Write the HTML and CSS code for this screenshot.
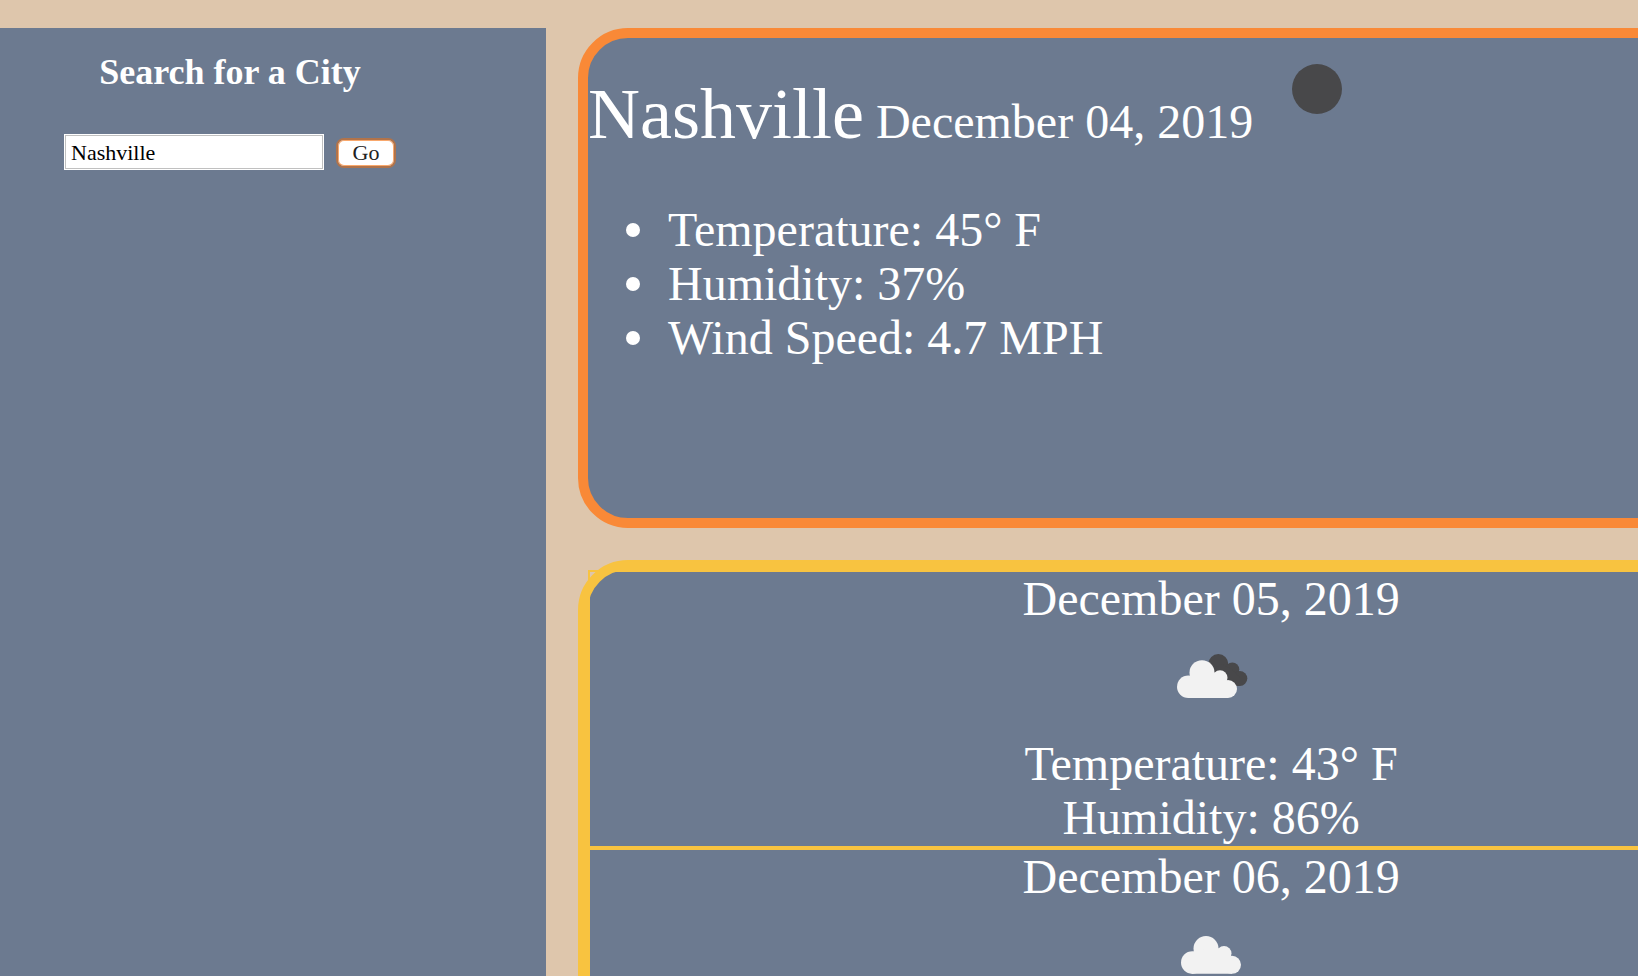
FILE: index.html
```html
<!DOCTYPE html>
<html lang="en">
<head>
<meta charset="utf-8">
<title>Weather Dashboard</title>
<link rel="stylesheet" href="styles.css">
</head>
<body>
<div class="layout">
  <aside class="sidebar">
    <form class="search">
      <h1 class="search-title"><label for="city">Search for a City</label></h1>
      <div class="search-row">
        <input class="search-input" id="city" type="text" value="Nashville">
        <button class="search-button" type="button">Go</button>
      </div>
    </form>
  </aside>
  <main class="content">
    <section class="current">
      <div class="current-head">
        <span class="city">Nashville</span>
        <span>December 04, 2019</span>
        <svg class="icon" viewBox="0 0 100 100" aria-hidden="true"><circle cx="52" cy="51" r="25" fill="#48484a"/></svg>
      </div>
      <ul class="stats">
        <li>Temperature: 45° F</li>
        <li>Humidity: 37%</li>
        <li>Wind Speed: 4.7 MPH</li>
      </ul>
    </section>
    <section class="forecast">
      <article class="day">
        <div class="day-date">December 05, 2019</div>
        <svg class="icon day-icon" viewBox="0 0 100 100" aria-hidden="true">
          <g fill="#48484a">
            <circle cx="57.300" cy="38" r="10"/>
            <circle cx="71.300" cy="43.500" r="7"/>
            <circle cx="78.800" cy="52.500" r="7.500"/>
            <path d="M50 45L60 38L71 43L79 52V60H66z"/>
          </g>
          <g fill="#f2f2f2" transform="translate(-4 2.200)">
            <circle cx="31.300" cy="58.600" r="11.300"/>
            <circle cx="45" cy="44.500" r="12.500"/>
            <circle cx="63" cy="49.500" r="7.500"/>
            <circle cx="71" cy="60.800" r="9"/>
            <path d="M31.300 48L45 44.500H60L71 55V69.800H31.300z"/>
          </g>
        </svg>
        <div>Temperature: 43° F</div>
        <div>Humidity: 86%</div>
      </article>
      <article class="day">
        <div class="day-date">December 06, 2019</div>
        <svg class="icon day-icon" viewBox="0 0 100 100" aria-hidden="true">
          <g fill="#f2f2f2">
            <circle cx="31.300" cy="58.600" r="11.300"/>
            <circle cx="45" cy="44.500" r="12.500"/>
            <circle cx="63" cy="49.500" r="7.500"/>
            <circle cx="71" cy="60.800" r="9"/>
            <path d="M31.300 48L45 44.500H60L71 55V69.800H31.300z"/>
          </g>
        </svg>
      </article>
    </section>
  </main>
</div>
</body>
</html>
```
FILE: styles.css
```css
* { box-sizing: border-box; }

body {
  margin: 0;
  height: 100vh;
  overflow: hidden;
  background: #dec6ac;
  color: #fff;
  font-family: "Liberation Serif", "Times New Roman", serif;
  font-size: 48px;
  line-height: 54px;
}

.layout {
  display: flex;
  gap: 32px;
  height: 100%;
  padding-top: 28px;
}

.sidebar {
  flex: 0 0 33.3333%;
  padding: 24px 0 0 64px;
  background: #6c7a90;
}

.search { width: fit-content; }

.search-title {
  margin: 0 0 42px;
  font-size: 36px;
  line-height: 40px;
  text-align: center;
}

.search-row {
  display: flex;
  align-items: center;
  gap: 12px;
}

.search-input {
  width: 260px;
  height: 36px;
  padding: 2px 5px 0;
  border: 2px solid #fff;
  outline: 1px solid #c0c0c0;
  outline-offset: -2px;
  background: #fff;
  color: #000;
  font: 22px "Liberation Serif", "Times New Roman", serif;
}

.search-button {
  width: 60px;
  height: 30px;
  margin-top: 2px;
  padding: 0;
  border: 2px solid #b1734a;
  border-radius: 8px;
  box-shadow: inset 0 0 0 1px #f9a86c;
  background: #fff;
  color: #222;
  font: 22px "Liberation Serif", "Times New Roman", serif;
}

.content { flex: 0 0 77.3%; }

.current {
  min-height: 500px;
  margin-bottom: 32px;
  border: 10px solid #f98937;
  border-radius: 50px;
  background: #6c7a90;
}

.city { font-size: 72px; }

.icon {
  width: 100px;
  height: 100px;
}

.stats {
  margin: 54px 0 48px;
  padding-left: 38px;
  list-style: none;
}

.stats li {
  display: flex;
  align-items: center;
  gap: 28px;
}

.stats li::before {
  content: "";
  width: 14px;
  height: 14px;
  border-radius: 50%;
  background: #fff;
}

.forecast {
  border: 10px solid #f8c340;
  border-radius: 50px;
  background: #6c7a90;
  text-align: center;
}

.day {
  min-height: 278px;
  border: 2px solid #f8c340;
}

.day-date { line-height: 53px; }

.day-icon {
  display: block;
  margin: 1px auto 11px;
}
```
